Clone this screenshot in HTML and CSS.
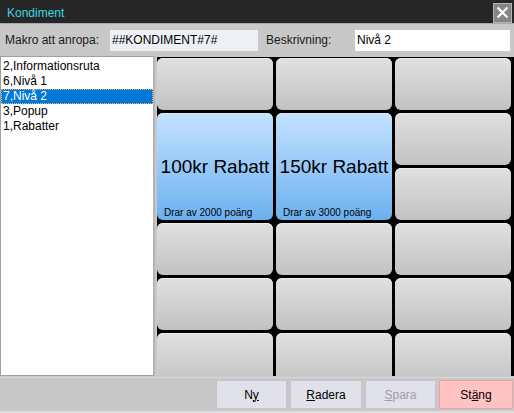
FILE: index.html
```html
<!DOCTYPE html>
<html>
<head>
<meta charset="utf-8">
<link rel="stylesheet" href="styles.css">
</head>
<body>
<div class="window">
  <div class="titlebar">
    <span class="title">Kondiment</span>
    <span class="close"><svg width="13" height="13" viewBox="0 0 13 13"><path d="M1.5 1.5 L11.5 11.5 M11.5 1.5 L1.5 11.5" stroke="#fff" stroke-width="2.2" fill="none"/></svg></span>
  </div>
  <div class="toolbar">
    <label class="lbl lbl1">Makro att anropa:</label>
    <div class="field field1">##KONDIMENT#7#</div>
    <label class="lbl lbl2">Beskrivning:</label>
    <div class="field field2">Nivå 2</div>
  </div>
  <div class="main">
    <ul class="list">
      <li>2,Informationsruta</li>
      <li>6,Nivå 1</li>
      <li class="sel">7,Nivå 2</li>
      <li>3,Popup</li>
      <li>1,Rabatter</li>
    </ul>
    <div class="grid">
      <div class="cell"></div>
      <div class="cell"></div>
      <div class="cell"></div>
      <div class="cell big"><span class="big-label">100kr Rabatt</span><span class="sub">Drar av 2000 poäng</span></div>
      <div class="cell big"><span class="big-label">150kr Rabatt</span><span class="sub">Drar av 3000 poäng</span></div>
      <div class="cell"></div>
      <div class="cell"></div>
      <div class="cell"></div>
      <div class="cell"></div>
      <div class="cell"></div>
      <div class="cell"></div>
      <div class="cell"></div>
      <div class="cell"></div>
      <div class="cell"></div>
      <div class="cell"></div>
      <div class="cell"></div>
    </div>
  </div>
  <div class="bottombar">
    <button class="btn btn-ny">N<u>y</u></button>
    <button class="btn btn-radera"><u>R</u>adera</button>
    <button class="btn btn-spara" disabled><u>S</u>para</button>
    <button class="btn btn-stang">St<u>ä</u>ng</button>
  </div>
</div>
</body>
</html>
```
FILE: styles.css
```css
* { box-sizing: border-box; }
html, body { margin: 0; padding: 0; }
body {
  width: 514px;
  height: 413px;
  overflow: hidden;
  font-family: "Liberation Sans", Arial, sans-serif;
  font-size: 12px;
  color: #000;
  background: #c8c8c8;
}
.window {
  width: 514px;
  height: 413px;
  display: flex;
  flex-direction: column;
  background: #c8c8c8;
}
.titlebar {
  height: 24px;
  flex: none;
  background: #262626;
  border-bottom: 1px solid #a8a8a8;
  display: flex;
  align-items: center;
  padding-left: 7px;
  padding-right: 2px;
}
.title {
  color: #3cd6e0;
  font-size: 12px;
  padding-top: 3px;
}
.close {
  margin-left: auto;
  width: 19px;
  height: 20px;
  background: #858585;
  border: 1px solid #b4b4b4;
  display: flex;
  align-items: center;
  justify-content: center;
  margin-top: 2px;
}
.toolbar {
  height: 32px;
  flex: none;
  display: flex;
  align-items: center;
  padding-left: 5px;
}
.lbl { color: #1a1a1a; }
.lbl1 { width: 105px; }
.lbl2 { width: 89px; margin-left: 8px; }
.field {
  height: 21px;
  line-height: 21px;
  padding-left: 2px;
  color: #000;
}
.field1 { width: 148px; background: #eef0f8; }
.field2 { width: 155px; background: #fff; }
.main {
  height: 321px;
  flex: none;
  display: flex;
  gap: 2px;
}
.list {
  margin: 0;
  padding: 2px 0 0 0;
  list-style: none;
  width: 155px;
  height: 320px;
  background: #fff;
  border: 1px solid #a0a0a0;
  border-right: 2px solid #b4b4b4;
}
.list li {
  height: 15px;
  line-height: 15px;
  padding-left: 2px;
  white-space: nowrap;
}
.list li.sel {
  background: #0078d7;
  color: #fff;
  outline: 1px dotted #f2b070;
  outline-offset: -1px;
}
.grid {
  flex: 1;
  margin-top: 1px;
  height: 319px;
  background: #000;
  overflow: hidden;
  padding-top: 1px;
  display: grid;
  grid-template-columns: repeat(3, 116px);
  grid-auto-rows: 52px;
  gap: 3px;
  align-content: start;
}
.cell {
  border-radius: 6px;
  background: linear-gradient(#e0e0e0, #c2c2c2);
  box-shadow: inset 0 1px 0 #ececec;
}
.cell.big {
  grid-row: span 2;
  background: linear-gradient(#c4e2ff, #6cb0f0);
  box-shadow: inset 0 1px 0 #d8ecff;
  display: grid;
  grid-template-areas: "stack";
}
.big-label {
  grid-area: stack;
  align-self: center;
  justify-self: center;
  font-size: 19px;
  white-space: nowrap;
  padding-top: 1px;
}
.sub {
  grid-area: stack;
  align-self: end;
  justify-self: start;
  font-size: 10px;
  padding-left: 7px;
  padding-bottom: 2px;
  white-space: nowrap;
}
.bottombar {
  flex: 1;
  display: flex;
  justify-content: flex-end;
  align-items: flex-start;
  gap: 3px;
  padding-top: 2px;
  padding-right: 1px;
  border-top: 1px solid #d6d6d6;
  border-bottom: 2px solid #dedede;
}
.btn {
  height: 29px;
  font-family: "Liberation Sans", Arial, sans-serif;
  font-size: 12px;
  color: #000;
  background: #e1e1e9;
  border: 1px solid #c4c4cc;
  padding: 0;
  margin: 0;
}
.btn-ny { width: 71px; }
.btn-radera { width: 72px; }
.btn-spara { width: 71px; color: #a0a0a0; }
.btn-stang { width: 74px; background: #ffc3c3; border-color: #f0a0a0; }
```
